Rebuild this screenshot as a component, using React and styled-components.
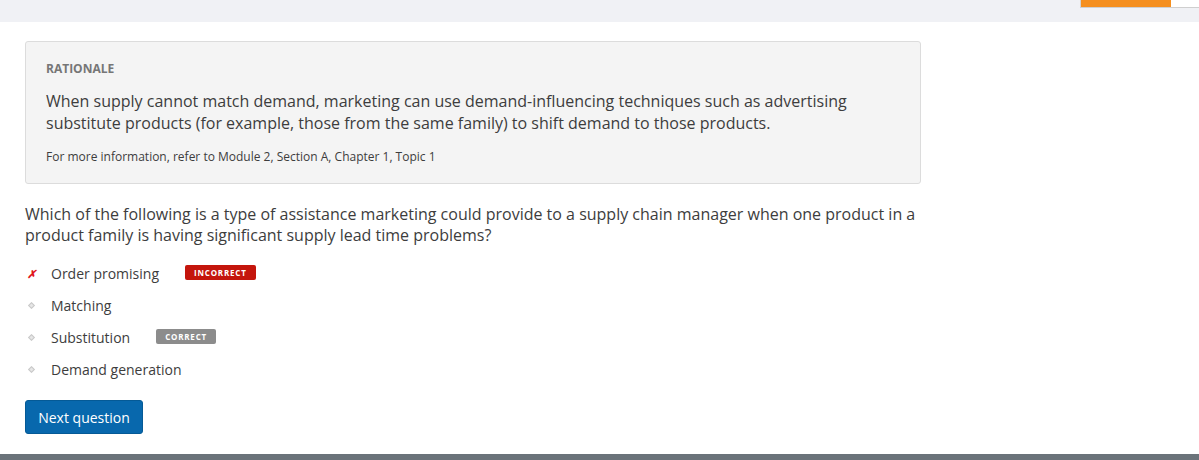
import React from 'react';
import styled, { createGlobalStyle } from 'styled-components';

const GlobalStyle = createGlobalStyle`
  body {
    margin: 0;
    background: #fff;
    font-family: 'Open Sans', 'Liberation Sans', sans-serif;
    color: #3f3f3f;
  }
`;

const Page = styled.div`
  width: 1199px;
  height: 460px;
  display: flex;
  flex-direction: column;
  overflow: hidden;
`;

const TopBand = styled.div`
  height: 22px;
  background: #f0f1f5;
  display: flex;
  justify-content: flex-end;
  align-items: flex-start;
`;

const Progress = styled.div`
  width: 118px;
  height: 7px;
  background: #fff;
  border-left: 1px solid #d4d4d4;
  border-bottom: 1px solid #cfcfcf;
  display: flex;
`;

const ProgressFill = styled.div`
  background: #f58f1f;
  height: 100%;
`;

const Content = styled.div`
  flex: 1;
  width: 896px;
  padding: 19px 0 0 25px;
  display: flex;
  flex-direction: column;
`;

const Rationale = styled.div`
  background: #f4f4f4;
  border: 1px solid #dcdcdc;
  border-radius: 3px;
  padding: 18px 20px 17px 20px;
`;

const Label = styled.div`
  font-size: 12px;
  font-weight: 700;
  color: #767676;
  line-height: 18px;
  margin-bottom: 12px;
`;

const Body = styled.p`
  margin: 0;
  font-size: 16px;
  line-height: 22px;
  color: #3d3d3d;
  max-width: 820px;
`;

const Reference = styled.p`
  margin: 14px 0 0;
  font-size: 12px;
  line-height: 18px;
  color: #3d3d3d;
`;

const Question = styled.p`
  margin: 20px 0 0;
  font-size: 16px;
  line-height: 21px;
  color: #3d3d3d;
`;

const Options = styled.ul`
  list-style: none;
  margin: 11px 0 0;
  padding: 0;
  display: flex;
  flex-direction: column;
`;

const Option = styled.li`
  height: 32px;
  display: flex;
  align-items: center;
  font-size: 14px;
  color: #3d3d3d;
`;

const Marker = styled.span`
  width: 26px;
  display: flex;
  align-items: center;
  padding-left: ${(p) => (p.wrong ? '2px' : '4px')};
  box-sizing: border-box;
`;

const Cross = styled.span`
  color: #e0161b;
  font-size: 11px;
  font-weight: 700;
  font-style: italic;
  line-height: 1;
`;

const Dot = styled.span`
  width: 3px;
  height: 3px;
  border: 1px solid #c9c9c9;
  background: #e6e6e6;
  transform: rotate(45deg);
`;

const Badge = styled.span`
  margin-left: 26px;
  background: ${(p) => (p.correct ? '#8c8c8c' : '#c4150c')};
  color: #fff;
  font-size: 8px;
  font-weight: 700;
  letter-spacing: 0.8px;
  line-height: 15px;
  height: 15px;
  padding: 0 9px;
  border-radius: 2px;
  margin-top: -2px;
`;

const NextButton = styled.button`
  align-self: flex-start;
  margin-top: 15px;
  height: 34px;
  width: 118px;
  background: #0868ad;
  color: #fff;
  border: 1px solid #055a96;
  border-radius: 3px;
  font-family: 'Open Sans', 'Liberation Sans', sans-serif;
  font-size: 14px;
  font-weight: 500;
  padding: 0;
  cursor: pointer;
`;

const BottomBar = styled.div`
  height: 6px;
  background: #6b737a;
`;

const options = [
  { text: 'Order promising', wrong: true, badge: 'INCORRECT' },
  { text: 'Matching' },
  { text: 'Substitution', badge: 'CORRECT', correct: true },
  { text: 'Demand generation' },
];

export default function App() {
  return (
    <Page>
      <GlobalStyle />
      <TopBand>
        <Progress>
          <ProgressFill style={{ width: '76%' }} />
        </Progress>
      </TopBand>
      <Content>
        <Rationale>
          <Label>RATIONALE</Label>
          <Body>
            When supply cannot match demand, marketing can use demand-influencing techniques such as advertising
            substitute products (for example, those from the same family) to shift demand to those products.
          </Body>
          <Reference>For more information, refer to Module 2, Section A, Chapter 1, Topic 1</Reference>
        </Rationale>
        <Question>
          Which of the following is a type of assistance marketing could provide to a supply chain manager when one product in a
          product family is having significant supply lead time problems?
        </Question>
        <Options>
          {options.map((o) => (
            <Option key={o.text}>
              <Marker wrong={o.wrong}>{o.wrong ? <Cross>✗</Cross> : <Dot />}</Marker>
              {o.text}
              {o.badge && <Badge correct={o.correct}>{o.badge}</Badge>}
            </Option>
          ))}
        </Options>
        <NextButton>Next question</NextButton>
      </Content>
      <BottomBar />
    </Page>
  );
}
